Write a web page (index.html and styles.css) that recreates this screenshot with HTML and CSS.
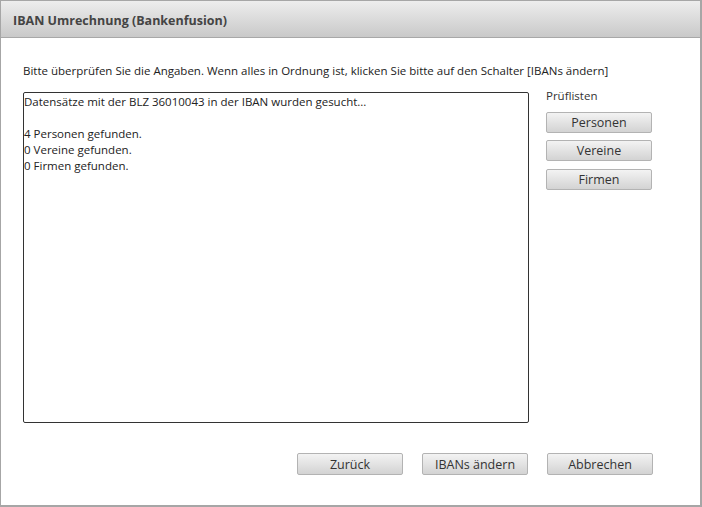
FILE: index.html
```html
<!DOCTYPE html>
<html lang="de">
<head>
  <meta charset="UTF-8" />
  <title>IBAN Umrechnung (Bankenfusion)</title>
  <link rel="stylesheet" href="styles.css">
</head>
<body>
  <div class="window">
    <div class="titlebar">IBAN Umrechnung (Bankenfusion)</div>
    <div class="content">
      <div class="intro">Bitte überprüfen Sie die Angaben. Wenn alles in Ordnung ist, klicken Sie bitte auf den Schalter [IBANs ändern]</div>
      <div class="main">
        <div class="log">Datensätze mit der BLZ 36010043 in der IBAN wurden gesucht...<br><br>4 Personen gefunden.<br>0 Vereine gefunden.<br>0 Firmen gefunden.</div>
        <div class="side">
          <div class="side-label">Prüflisten</div>
          <button class="btn">Personen</button>
          <button class="btn">Vereine</button>
          <button class="btn">Firmen</button>
        </div>
      </div>
      <div class="footer">
        <button class="btn">Zurück</button>
        <button class="btn">IBANs ändern</button>
        <button class="btn">Abbrechen</button>
      </div>
    </div>
  </div>
</body>
</html>
```

FILE: styles.css
```css
body {
  margin: 0;
  font-family: 'Open Sans', 'Noto Sans', sans-serif;
  font-size: 11.5px;
  color: #222;
  background: #fff;
}
.window {
  width: 702px;
  height: 507px;
  box-sizing: border-box;
  border: 1px solid #a6a6a6;
  border-right-width: 2px;
  border-bottom-width: 2px;
  display: flex;
  flex-direction: column;
}
.titlebar {
  height: 37px;
  flex-shrink: 0;
  box-sizing: border-box;
  padding: 11px 0 0 12px;
  background: linear-gradient(to bottom, #ededed, #c9c9c9);
  border-bottom: 1px solid #a8a8a8;
  font-weight: bold;
  font-size: 12.5px;
  color: #444;
}
.content {
  padding: 25px 47px 0 22px;
  display: flex;
  flex-direction: column;
}
.intro {
  line-height: 16px;
  color: #222;
}
.main {
  display: flex;
  margin-top: 13px;
  gap: 17px;
}
.log {
  width: 506px;
  height: 331px;
  box-sizing: border-box;
  border: 1px solid #333;
  border-radius: 2px;
  padding: 1px 0 0 0;
  line-height: 16px;
}
.side {
  display: flex;
  flex-direction: column;
  width: 107px;
}
.side-label {
  line-height: 16px;
  margin-top: -4px;
  color: #333;
}
.side .btn {
  height: 21px;
  margin-top: 7.5px;
}
.btn {
  width: 106px;
  height: 22px;
  padding: 0;
  font-family: inherit;
  font-size: 12.5px;
  color: #333;
  background: linear-gradient(to bottom, #f3f3f3, #d3d3d3);
  border: 1px solid #b3b3b3;
  border-radius: 2px;
}
.footer {
  display: flex;
  justify-content: flex-end;
  gap: 19px;
  margin-top: 30px;
}
```
